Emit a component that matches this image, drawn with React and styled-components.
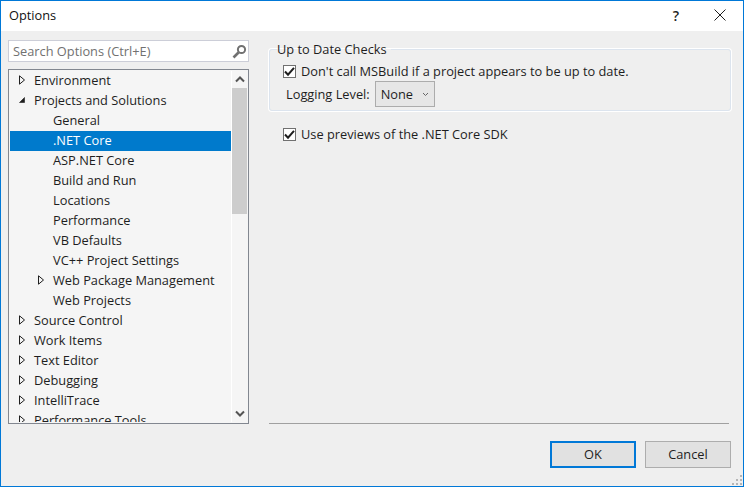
import styled, { createGlobalStyle } from "styled-components";

const GlobalStyle = createGlobalStyle`
  html, body {
    margin: 0;
    padding: 0;
    width: 744px;
    height: 487px;
    overflow: hidden;
    background: #efefef;
    font-family: "Open Sans", "Noto Sans", sans-serif;
    font-size: 12.8px;
    color: #1e1e1e;
  }
`;

const treeItems = [
  { label: "Environment", depth: 0, arrow: "closed" },
  { label: "Projects and Solutions", depth: 0, arrow: "open" },
  { label: "General", depth: 1 },
  { label: ".NET Core", depth: 1, selected: true },
  { label: "ASP.NET Core", depth: 1 },
  { label: "Build and Run", depth: 1 },
  { label: "Locations", depth: 1 },
  { label: "Performance", depth: 1 },
  { label: "VB Defaults", depth: 1 },
  { label: "VC++ Project Settings", depth: 1 },
  { label: "Web Package Management", depth: 1, arrow: "closed" },
  { label: "Web Projects", depth: 1 },
  { label: "Source Control", depth: 0, arrow: "closed" },
  { label: "Work Items", depth: 0, arrow: "closed" },
  { label: "Text Editor", depth: 0, arrow: "closed" },
  { label: "Debugging", depth: 0, arrow: "closed" },
  { label: "IntelliTrace", depth: 0, arrow: "closed" },
  { label: "Performance Tools", depth: 0, arrow: "closed" },
];

function Arrow({ type }) {
  if (type === "open") {
    return (
      <svg width="8" height="8" viewBox="0 0 8 8">
        <path d="M6.5 1.5V6.5H1.5Z" fill="#1e1e1e" stroke="#1e1e1e" strokeWidth="0.6" />
      </svg>
    );
  }
  return (
    <svg width="8" height="10" viewBox="0 0 8 10">
      <path d="M1.5 .8V9.2L6.5 5Z" fill="none" stroke="#1e1e1e" strokeWidth="1" />
    </svg>
  );
}

function Check() {
  return (
    <CheckBox>
      <svg width="11" height="11" viewBox="0 0 11 11">
        <path d="M1 5.5L4 8.7L10 1.8" fill="none" stroke="#1e1e1e" strokeWidth="2" />
      </svg>
    </CheckBox>
  );
}

export default function App() {
  return (
    <>
      <GlobalStyle />
      <Dialog>
        <TitleBar>
          <Title>Options</Title>
          <HelpButton>?</HelpButton>
          <CloseButton>
            <svg width="12" height="12" viewBox="0 0 12 12">
              <path d="M.5 .5L11.5 11.5M11.5 .5L.5 11.5" stroke="#1e1e1e" strokeWidth="1" fill="none" />
            </svg>
          </CloseButton>
        </TitleBar>
        <Body>
          <Sidebar>
            <Search>
              <SearchText>Search Options (Ctrl+E)</SearchText>
              <svg width="15" height="15" viewBox="0 0 15 15">
                <circle cx="9.5" cy="5.5" r="3.6" fill="none" stroke="#717171" strokeWidth="2" />
                <path d="M6.5 8.5L1.5 13.5" stroke="#717171" strokeWidth="2.6" />
              </svg>
            </Search>
            <Tree>
              <TreeList>
                {treeItems.map((item) => (
                  <TreeRow key={item.label} $depth={item.depth} $selected={item.selected}>
                    <ArrowSlot>{item.arrow && <Arrow type={item.arrow} />}</ArrowSlot>
                    {item.label}
                  </TreeRow>
                ))}
              </TreeList>
              <ScrollBar>
                <ScrollButton>
                  <svg width="10" height="7" viewBox="0 0 10 7">
                    <path d="M1 5.5L5 1.5L9 5.5" fill="none" stroke="#555" strokeWidth="2" />
                  </svg>
                </ScrollButton>
                <ScrollTrack>
                  <ScrollThumb />
                </ScrollTrack>
                <ScrollButton>
                  <svg width="10" height="7" viewBox="0 0 10 7">
                    <path d="M1 1.5L5 5.5L9 1.5" fill="none" stroke="#555" strokeWidth="2" />
                  </svg>
                </ScrollButton>
              </ScrollBar>
            </Tree>
          </Sidebar>
          <Content>
            <GroupBox>
              <GroupLegend>Up to Date Checks</GroupLegend>
              <CheckRow>
                <Check />
                Don't call MSBuild if a project appears to be up to date.
              </CheckRow>
              <LevelRow>
                Logging Level:
                <Select>
                  None
                  <svg width="7" height="5" viewBox="0 0 7 5">
                    <path d="M1 1L3.5 3.5L6 1" fill="none" stroke="#666" strokeWidth="1" />
                  </svg>
                </Select>
              </LevelRow>
            </GroupBox>
            <PreviewRow>
              <Check />
              Use previews of the .NET Core SDK
            </PreviewRow>
            <Divider />
          </Content>
        </Body>
        <Footer>
          <Button $primary>OK</Button>
          <Button>Cancel</Button>
        </Footer>
        <Grip>
          <svg width="10" height="10" viewBox="0 0 10 10">
            <path d="M8 0h2v2H8zM4 4h2v2H4zM8 4h2v2H8zM0 8h2v2H0zM4 8h2v2H4zM8 8h2v2H8z" fill="#b5b5b5" />
          </svg>
        </Grip>
      </Dialog>
    </>
  );
}

const Dialog = styled.div`
  position: relative;
  box-sizing: border-box;
  width: 744px;
  height: 487px;
  display: flex;
  flex-direction: column;
  border: 1px solid #0078d7;
  background: #efefef;
`;

const TitleBar = styled.div`
  flex: none;
  height: 30px;
  display: flex;
  align-items: center;
  padding-bottom: 2px;
  box-sizing: border-box;
  background: #fff;
`;

const Title = styled.div`
  flex: 1;
  padding-left: 8px;
  color: #111;
`;

const HelpButton = styled.div`
  width: 46px;
  margin-right: -2px;
  text-align: center;
  font-size: 14px;
  font-weight: 600;
  color: #222;
`;

const CloseButton = styled.div`
  width: 46px;
  display: flex;
  align-items: center;
  justify-content: center;
`;

const Body = styled.div`
  flex: none;
  height: 393px;
  display: flex;
  padding-top: 9px;
  box-sizing: border-box;
`;

const Sidebar = styled.div`
  flex: none;
  width: 241px;
  margin-left: 7px;
  display: flex;
  flex-direction: column;
  gap: 7px;
`;

const Search = styled.div`
  flex: none;
  box-sizing: border-box;
  height: 22px;
  display: flex;
  align-items: center;
  justify-content: space-between;
  padding: 0 1px 0 4px;
  background: #fff;
  border: 1px solid #ccced8;
`;

const SearchText = styled.span`
  color: #717171;
`;

const Tree = styled.div`
  box-sizing: border-box;
  height: 355px;
  display: flex;
  padding: 1px;
  background: #f5f5f5;
  border: 1px solid #828790;
  overflow: hidden;
`;

const TreeList = styled.div`
  flex: 1;
  min-width: 0;
  overflow: hidden;
`;

const TreeRow = styled.div`
  box-sizing: border-box;
  height: 20px;
  display: flex;
  align-items: center;
  padding: 0 0 2px ${(p) => (p.$depth === 1 ? 26 : 7)}px;
  white-space: nowrap;
  background: ${(p) => (p.$selected ? "#007acc" : "transparent")};
  color: ${(p) => (p.$selected ? "#fff" : "#1e1e1e")};
`;

const ArrowSlot = styled.span`
  flex: none;
  box-sizing: border-box;
  width: 17px;
  padding-left: 1px;
  display: flex;
  align-items: center;
`;

const ScrollBar = styled.div`
  flex: none;
  width: 15px;
  display: flex;
  flex-direction: column;
  background: #f5f5f5;
  border-left: 1px solid #fff;
`;

const ScrollButton = styled.div`
  flex: none;
  height: 17px;
  display: flex;
  align-items: center;
  justify-content: center;
`;

const ScrollTrack = styled.div`
  flex: 1;
`;

const ScrollThumb = styled.div`
  height: 126px;
  background: #cdcdcd;
`;

const Content = styled.div`
  flex: none;
  width: 462px;
  margin-left: 20px;
  display: flex;
  flex-direction: column;
`;

const GroupBox = styled.fieldset`
  box-sizing: border-box;
  height: 71px;
  margin: 0;
  padding: 3px 0 0 13px;
  border: 1px solid #dce4ee;
  border-radius: 3px;
  box-shadow: 0 0 0 1px #fff;
`;

const GroupLegend = styled.legend`
  padding: 0 4px 0 0;
  margin-left: -6px;
  line-height: 18px;
`;

const CheckRow = styled.div`
  height: 20px;
  display: flex;
  align-items: center;
  gap: 5px;
`;

const CheckBox = styled.span`
  flex: none;
  box-sizing: border-box;
  width: 13px;
  height: 13px;
  display: flex;
  align-items: center;
  justify-content: center;
  background: #fff;
  border: 1px solid #707070;
`;

const LevelRow = styled.div`
  display: flex;
  align-items: center;
  gap: 5px;
  margin: 0 0 0 3px;
`;

const Select = styled.div`
  box-sizing: border-box;
  width: 60px;
  height: 26px;
  display: flex;
  align-items: center;
  justify-content: space-between;
  padding: 0 5px 0 5px;
  background: #e6e6e6;
  border: 1px solid #acacac;
`;

const PreviewRow = styled(CheckRow)`
  margin: 13px 0 0 14px;
`;

const Divider = styled.div`
  height: 1px;
  margin-top: auto;
  width: 460px;
  background: #a0a0a0;
`;

const Footer = styled.div`
  flex: 1;
  display: flex;
  align-items: flex-start;
  justify-content: flex-end;
  gap: 9px;
  padding: 17px 12px 0 0;
`;

const Button = styled.div`
  box-sizing: border-box;
  width: 86px;
  height: 27px;
  display: flex;
  align-items: center;
  justify-content: center;
  padding-bottom: 1px;
  background: #e1e1e1;
  border: ${(p) => (p.$primary ? "2px solid #0078d7" : "1px solid #adadad")};
`;

const Grip = styled.div`
  position: absolute;
  right: 1px;
  bottom: 1px;
  line-height: 0;
`;
